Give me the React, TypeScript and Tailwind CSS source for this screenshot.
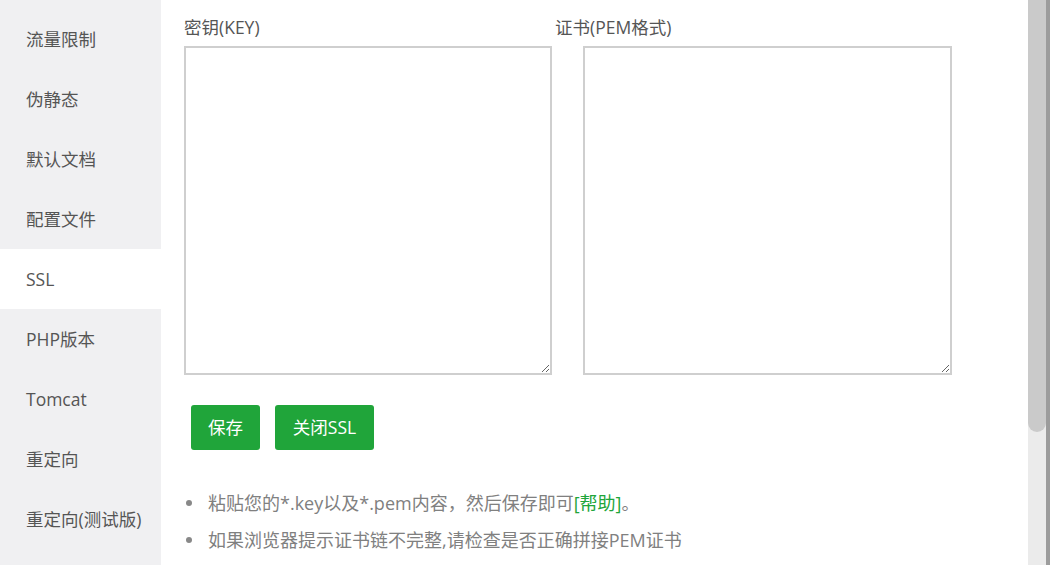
import React from "react";

const menu = ["流量限制", "伪静态", "默认文档", "配置文件", "SSL", "PHP版本", "Tomcat", "重定向", "重定向(测试版)"];

export default function App() {
  return (
    <div
      className="flex w-[1050px] h-[565px] overflow-hidden bg-white"
      style={{ fontFamily: '"Open Sans", "Noto Sans CJK SC", sans-serif' }}
    >
      <div className="w-[161px] shrink-0 bg-[#f0f0f2] pt-[9px] flex flex-col">
        {menu.map((m) => (
          <div
            key={m}
            className={`h-[60px] shrink-0 flex items-center pl-[26px] text-[17.5px] text-[#555555] ${
              m === "SSL" ? "bg-white" : ""
            }`}
          >
            {m}
          </div>
        ))}
      </div>
      <div className="flex-1 pl-[23px] pt-[14px]">
        <div className="flex">
          <div className="w-[371px] flex flex-col">
            <div className="h-[26px] leading-[26px] text-[17.5px] text-[#555555]">密钥(KEY)</div>
            <textarea className="mt-[6px] w-[368px] h-[329px] border-2 border-[#cfcfcf] outline-none resize" />
          </div>
          <div className="flex flex-col">
            <div className="h-[26px] leading-[26px] text-[17.5px] text-[#555555]">证书(PEM格式)</div>
            <textarea className="mt-[6px] ml-[28px] w-[369px] h-[329px] border-2 border-[#cfcfcf] outline-none resize" />
          </div>
        </div>
        <div className="flex gap-[15px] ml-[7px] mt-[30px]">
          <button className="w-[69px] h-[45px] rounded-[3px] bg-[#20a53a] text-white text-[17.5px]">保存</button>
          <button className="w-[99px] h-[45px] rounded-[3px] bg-[#20a53a] text-white text-[17.5px]">关闭SSL</button>
        </div>
        <ul className="mt-[41px] flex flex-col gap-[13px] text-[18px] text-[#808080]">
          <li className="flex items-center h-[24px]">
            <span className="w-[6px] h-[6px] rounded-full bg-[#888888] ml-[2px] mr-[16px]" />
            <span>
              粘贴您的*.key以及*.pem内容，然后保存即可<span className="text-[#20a53a]">[帮助]</span>。
            </span>
          </li>
          <li className="flex items-center h-[24px]">
            <span className="w-[6px] h-[6px] rounded-full bg-[#888888] ml-[2px] mr-[16px]" />
            <span>如果浏览器提示证书链不完整,请检查是否正确拼接PEM证书</span>
          </li>
        </ul>
      </div>
      <div className="w-[18px] shrink-0 flex flex-col bg-[#ebebeb]">
        <div className="h-[432px] bg-[#cacaca] rounded-b-[9px]" />
      </div>
      <div className="w-[4px] shrink-0 bg-[#9c9c9c]" />
    </div>
  );
}
